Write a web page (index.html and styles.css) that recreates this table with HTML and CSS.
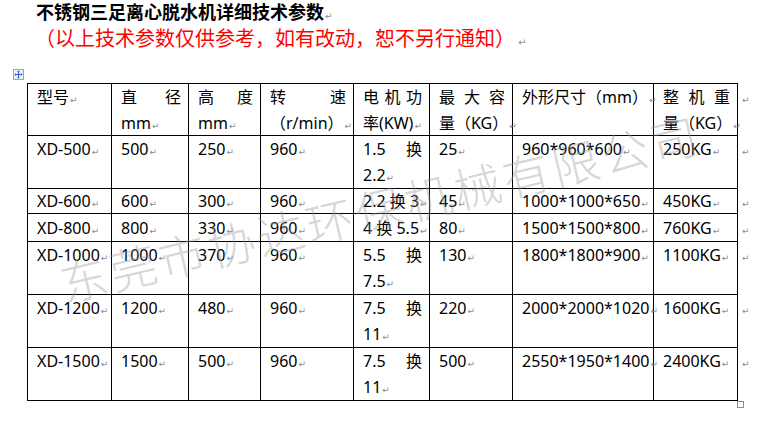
FILE: index.html
```html
<!DOCTYPE html>
<html lang="zh-CN">
<head>
<meta charset="utf-8">
<title>不锈钢三足离心脱水机详细技术参数</title>
<link rel="stylesheet" href="styles.css">
</head>
<body>
<div class="page">
  <p class="title">不锈钢三足离心脱水机详细技术参数<span class="pm">↵</span></p>
  <p class="note">（以上技术参数仅供参考，如有改动，恕不另行通知）<span class="pm pm-note">↵</span></p>

  <div class="table-wrap">
    <span class="move-handle">
      <svg width="11" height="11" viewBox="0 0 11 11">
        <rect x="0.5" y="0.5" width="10" height="10" fill="#eef2fa" stroke="#9aa3b5"/>
        <path d="M5.5 2v7M2 5.5h7" stroke="#2a5bd7" stroke-width="1"/>
        <path d="M5.5 1.5l-1.5 1.5h3zM5.5 9.5l-1.5-1.5h3zM1.5 5.5l1.5-1.5v3zM9.5 5.5l-1.5-1.5v3z" fill="#2a5bd7"/>
      </svg>
    </span>
    <table class="spec">
      <colgroup>
        <col class="c1"><col class="c2"><col class="c3"><col class="c4"><col class="c5"><col class="c6"><col class="c7"><col class="c8"><col class="c9">
      </colgroup>
      <tr class="r-head">
        <td><div class="ln">型号<span class="pm">↵</span></div></td>
        <td><div class="ln spread"><span>直</span><span>径</span></div><div class="ln">mm<span class="pm">↵</span></div></td>
        <td><div class="ln spread"><span>高</span><span>度</span></div><div class="ln">mm<span class="pm">↵</span></div></td>
        <td><div class="ln spread"><span>转</span><span>速</span></div><div class="ln">（r/min）<span class="pm">↵</span></div></td>
        <td><div class="ln spread"><span>电</span><span>机</span><span>功</span></div><div class="ln">率(KW)<span class="pm">↵</span></div></td>
        <td><div class="ln spread"><span>最</span><span>大</span><span>容</span></div><div class="ln">量（KG）<span class="pm">↵</span></div></td>
        <td><div class="ln">外形尺寸（mm）<span class="pm">↵</span></div></td>
        <td><div class="ln spread"><span>整</span><span>机</span><span>重</span></div><div class="ln">量（KG）<span class="pm">↵</span></div></td>
        <td class="eor"><div class="ln"><span class="pm">↵</span></div></td>
      </tr>
      <tr class="r-two">
        <td><div class="ln">XD-500<span class="pm">↵</span></div></td>
        <td><div class="ln">500<span class="pm">↵</span></div></td>
        <td><div class="ln">250<span class="pm">↵</span></div></td>
        <td><div class="ln">960<span class="pm">↵</span></div></td>
        <td><div class="ln spread"><span>1.5</span><span>换</span></div><div class="ln">2.2<span class="pm">↵</span></div></td>
        <td><div class="ln">25<span class="pm">↵</span></div></td>
        <td><div class="ln">960*960*600<span class="pm">↵</span></div></td>
        <td><div class="ln">250KG<span class="pm">↵</span></div></td>
        <td class="eor"><div class="ln"><span class="pm">↵</span></div></td>
      </tr>
      <tr class="r-short">
        <td><div class="ln">XD-600<span class="pm">↵</span></div></td>
        <td><div class="ln">600<span class="pm">↵</span></div></td>
        <td><div class="ln">300<span class="pm">↵</span></div></td>
        <td><div class="ln">960<span class="pm">↵</span></div></td>
        <td><div class="ln">2.2 换 3<span class="pm">↵</span></div></td>
        <td><div class="ln">45<span class="pm">↵</span></div></td>
        <td><div class="ln">1000*1000*650<span class="pm">↵</span></div></td>
        <td><div class="ln">450KG<span class="pm">↵</span></div></td>
        <td class="eor"><div class="ln"><span class="pm">↵</span></div></td>
      </tr>
      <tr class="r-mid">
        <td><div class="ln">XD-800<span class="pm">↵</span></div></td>
        <td><div class="ln">800<span class="pm">↵</span></div></td>
        <td><div class="ln">330<span class="pm">↵</span></div></td>
        <td><div class="ln">960<span class="pm">↵</span></div></td>
        <td><div class="ln">4 换 5.5<span class="pm">↵</span></div></td>
        <td><div class="ln">80<span class="pm">↵</span></div></td>
        <td><div class="ln">1500*1500*800<span class="pm">↵</span></div></td>
        <td><div class="ln">760KG<span class="pm">↵</span></div></td>
        <td class="eor"><div class="ln"><span class="pm">↵</span></div></td>
      </tr>
      <tr class="r-two">
        <td><div class="ln">XD-1000<span class="pm">↵</span></div></td>
        <td><div class="ln">1000<span class="pm">↵</span></div></td>
        <td><div class="ln">370<span class="pm">↵</span></div></td>
        <td><div class="ln">960<span class="pm">↵</span></div></td>
        <td><div class="ln spread"><span>5.5</span><span>换</span></div><div class="ln">7.5<span class="pm">↵</span></div></td>
        <td><div class="ln">130<span class="pm">↵</span></div></td>
        <td><div class="ln">1800*1800*900<span class="pm">↵</span></div></td>
        <td><div class="ln">1100KG<span class="pm">↵</span></div></td>
        <td class="eor"><div class="ln"><span class="pm">↵</span></div></td>
      </tr>
      <tr class="r-two">
        <td><div class="ln">XD-1200<span class="pm">↵</span></div></td>
        <td><div class="ln">1200<span class="pm">↵</span></div></td>
        <td><div class="ln">480<span class="pm">↵</span></div></td>
        <td><div class="ln">960<span class="pm">↵</span></div></td>
        <td><div class="ln spread"><span>7.5</span><span>换</span></div><div class="ln">11<span class="pm">↵</span></div></td>
        <td><div class="ln">220<span class="pm">↵</span></div></td>
        <td><div class="ln">2000*2000*1020<span class="pm">↵</span></div></td>
        <td><div class="ln">1600KG<span class="pm">↵</span></div></td>
        <td class="eor"><div class="ln"><span class="pm">↵</span></div></td>
      </tr>
      <tr class="r-two">
        <td><div class="ln">XD-1500<span class="pm">↵</span></div></td>
        <td><div class="ln">1500<span class="pm">↵</span></div></td>
        <td><div class="ln">500<span class="pm">↵</span></div></td>
        <td><div class="ln">960<span class="pm">↵</span></div></td>
        <td><div class="ln spread"><span>7.5</span><span>换</span></div><div class="ln">11<span class="pm">↵</span></div></td>
        <td><div class="ln">500<span class="pm">↵</span></div></td>
        <td><div class="ln">2550*1950*1400<span class="pm">↵</span></div></td>
        <td><div class="ln">2400KG<span class="pm">↵</span></div></td>
        <td class="eor"><div class="ln"><span class="pm">↵</span></div></td>
      </tr>
    </table>
    <span class="resize-handle"></span>
  </div>

  <div class="watermark">东莞市协达环保机械有限公司</div>
</div>
</body>
</html>
```

FILE: styles.css
```css
html, body {
  margin: 0;
  padding: 0;
  background: #ffffff;
}

.page {
  position: relative;
  width: 767px;
  height: 430px;
  overflow: hidden;
  font-family: "Noto Sans", "Noto Sans CJK SC", sans-serif;
  color: #000;
}

.title {
  margin: 0;
  padding: 0 0 0 36px;
  font-family: "Noto Sans CJK SC", sans-serif;
  font-weight: 700;
  font-size: 18px;
  line-height: 22px;
  height: 22px;
}

.note {
  margin: 4px 0 0 0;
  padding-left: 35px;
  font-family: "Noto Sans CJK SC", sans-serif;
  font-size: 20px;
  line-height: 24px;
  height: 24px;
  color: #ff0000;
}

.pm {
  font-family: "DejaVu Sans", sans-serif;
  font-weight: 400;
  font-size: 9px;
  line-height: 0;
  color: #8c8c8c;
  margin-left: 1px;
}

.pm-note {
  font-size: 10px;
  margin-left: 3px;
}

.table-wrap {
  position: relative;
  margin: 33px 0 0 27px;
  width: 730px;
}

.move-handle {
  position: absolute;
  left: -14px;
  top: -14px;
  width: 11px;
  height: 11px;
  line-height: 0;
}

.resize-handle {
  position: absolute;
  left: 710px;
  bottom: -7px;
  width: 5px;
  height: 5px;
  border: 1px solid #8c8c8c;
  background: #fff;
}

.spec {
  border-collapse: collapse;
  table-layout: fixed;
  width: 730px;
  font-size: 16px;
  line-height: 26px;
}

.spec col.c1 { width: 84px; }
.spec col.c2 { width: 77px; }
.spec col.c3 { width: 72px; }
.spec col.c4 { width: 93px; }
.spec col.c5 { width: 76px; }
.spec col.c6 { width: 83px; }
.spec col.c7 { width: 141px; }
.spec col.c8 { width: 84px; }
.spec col.c9 { width: 20px; }

.spec td {
  border: 1px solid #000;
  padding: 0 7px 0 9px;
  vertical-align: top;
  white-space: nowrap;
  overflow: visible;
}

.spec td.eor {
  border: none;
  padding: 0 0 0 3px;
}

.ln {
  height: 26px;
  overflow: visible;
}

.spec tr.r-head .ln {
  height: 25.5px;
}

.spec tr.r-short .ln {
  height: 24px;
  line-height: 24px;
}

.spec tr.r-mid .ln {
  height: 27px;
  line-height: 28px;
}

.spread {
  display: flex;
  justify-content: space-between;
}

.watermark {
  position: absolute;
  left: 380px;
  top: 207px;
  transform: translate(-50%, -50%) rotate(-13.3deg);
  font-family: "Noto Sans CJK SC", sans-serif;
  font-weight: 300;
  font-size: 47px;
  letter-spacing: 3.5px;
  line-height: 1;
  white-space: nowrap;
  color: rgba(150, 150, 150, 0.4);
  pointer-events: none;
}
```
